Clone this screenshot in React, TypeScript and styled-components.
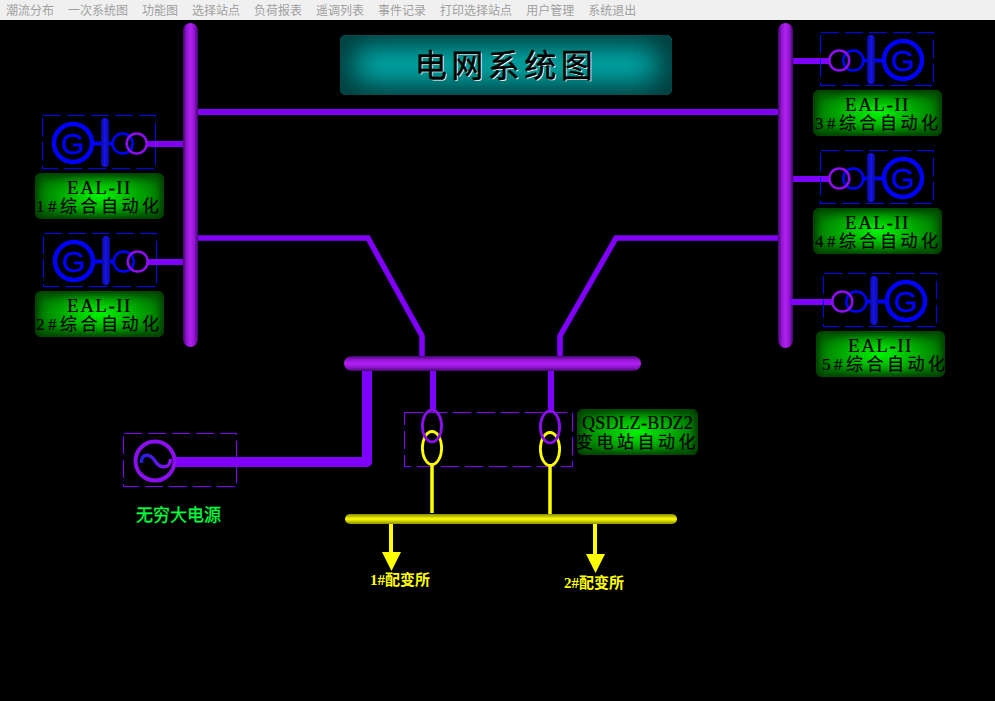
import styled, { createGlobalStyle } from "styled-components";

const GlobalStyle = createGlobalStyle`
  html, body {
    margin: 0;
    padding: 0;
    background: #000;
    overflow: hidden;
  }
`;

const Page = styled.div`
  width: 995px;
  height: 701px;
  display: flex;
  flex-direction: column;
  background: #000;
`;

const Menu = styled.nav`
  height: 20px;
  flex: none;
  display: flex;
  align-items: center;
  gap: 14px;
  padding-left: 6px;
  background: #f0f0f0;
`;

const MenuItem = styled.span`
  font: 12px/20px "Noto Sans CJK SC", sans-serif;
  color: #a0a0a0;
  white-space: nowrap;
`;

const Canvas = styled.div`
  position: relative;
  flex: 1;
`;

const Drawing = styled.svg`
  position: absolute;
  left: 0;
  top: 0;
  display: block;
`;

const Wire = styled.path<{ $color: string; $width: number }>`
  fill: none;
  stroke: ${(p) => p.$color};
  stroke-width: ${(p) => p.$width};
`;

const Ring = styled.ellipse<{ $color: string; $width: number; $solid?: boolean }>`
  fill: ${(p) => (p.$solid ? "#000" : "none")};
  stroke: ${(p) => p.$color};
  stroke-width: ${(p) => p.$width};
`;

const DashBox = styled.rect<{ $color: string }>`
  fill: none;
  stroke: ${(p) => p.$color};
  stroke-width: 1;
  stroke-dasharray: 18 6;
  shape-rendering: crispEdges;
`;

const GLetter = styled.text`
  font: 30px "Liberation Sans", sans-serif;
  fill: #0000ff;
  stroke: #0000ff;
  stroke-width: 0.4;
  text-anchor: middle;
`;

// canvas starts below the 20px menu, labels use page coordinates minus that
const Plate = styled.div<{ $x: number; $y: number; $w: number; $h: number }>`
  position: absolute;
  left: ${(p) => p.$x}px;
  top: ${(p) => p.$y - 20}px;
  width: ${(p) => p.$w}px;
  height: ${(p) => p.$h}px;
  box-sizing: border-box;
  padding-top: 5px;
  border-radius: 6px;
  color: #000;
  -webkit-text-stroke: 0.2px #000;
  background: radial-gradient(ellipse 52% 56% at center, #00f400 0%, #00c000 40%, #007000 100%);
  box-shadow: inset 0 0 10px 2px #002c00;
`;

const PlateCode = styled.div<{ $size: number; $spacing: number }>`
  height: 19px;
  font: ${(p) => p.$size}px/19px "Liberation Serif", serif;
  letter-spacing: ${(p) => p.$spacing}px;
  text-align: center;
  white-space: nowrap;
`;

const PlateName = styled.div<{ $indent: number }>`
  height: 19px;
  margin-left: ${(p) => p.$indent}px;
  font: 17px/19px "Liberation Serif", "Noto Sans CJK SC", serif;
  letter-spacing: 3.5px;
  white-space: nowrap;
`;

const TitlePlate = styled.div`
  position: absolute;
  left: 340px;
  top: 15px;
  width: 332px;
  height: 60px;
  box-sizing: border-box;
  padding-bottom: 5px;
  display: flex;
  align-items: center;
  justify-content: center;
  border-radius: 6px;
  background: #00c4c4;
  box-shadow: inset 0 0 30px 15px #003a3a;
`;

const TitleText = styled.h1`
  margin: 0;
  font: 400 32px/36px "Noto Sans CJK SC", sans-serif;
  letter-spacing: 4.5px;
  color: #000;
  -webkit-text-stroke: 0.5px #000;
  text-shadow: 1px 1px 0 #fff;
  white-space: nowrap;
`;

const Caption = styled.div<{ $x: number; $y: number; $color: string }>`
  position: absolute;
  left: ${(p) => p.$x}px;
  top: ${(p) => p.$y - 20}px;
  font: 700 15px/18px "Liberation Serif", "Noto Sans CJK SC", serif;
  color: ${(p) => p.$color};
  white-space: nowrap;
`;

const SourceCaption = styled(Caption)`
  font: 400 17px/20px "Noto Sans CJK SC", sans-serif;
  -webkit-text-stroke: 0.3px ${(p) => p.$color};
`;

const PURPLE = "#8000ff";
const VIOLET = "#8a10f0";
const BLUE = "#0000ff";
const YELLOW = "#ffff00";

const menuItems = [
  "潮流分布",
  "一次系统图",
  "功能图",
  "选择站点",
  "负荷报表",
  "遥调列表",
  "事件记录",
  "打印选择站点",
  "用户管理",
  "系统退出",
];

const plates = [
  { x: 35, y: 173, code: "EAL-II", name: "1#综合自动化", indent: 1 },
  { x: 35, y: 291, code: "EAL-II", name: "2#综合自动化", indent: 1 },
  { x: 813, y: 90, code: "EAL-II", name: "3#综合自动化", indent: 2 },
  { x: 813, y: 208, code: "EAL-II", name: "4#综合自动化", indent: 2 },
  { x: 816, y: 331, code: "EAL-II", name: "5#综合自动化", indent: 6 },
];

const generators = [
  { x: 42, y: 115, flip: false },
  { x: 43, y: 233, flip: false },
  { x: 820, y: 32, flip: true },
  { x: 820, y: 150, flip: true },
  { x: 823, y: 273, flip: true },
];

const Generator = ({ x, y, flip }: { x: number; y: number; flip: boolean }) => {
  // drawn facing the left bus, mirrored for the ones on the right bus
  const at = (d: number) => (flip ? 114 - d : d);
  return (
    <g transform={`translate(${x} ${y})`}>
      <DashBox $color={BLUE} x={0.5} y={0.5} width={113} height={53} />
      <Ring $color={BLUE} $width={4.5} cx={at(31)} cy={28} rx={19} ry={19} />
      <GLetter x={at(31)} y={38.5}>
        G
      </GLetter>
      <Wire $color={BLUE} $width={4} d={`M${at(51)} 28.5H${at(60)}`} />
      <Wire $color={BLUE} $width={4} d={`M${at(66)} 28.5H${at(71)}`} />
      <rect x={at(flip ? 67 : 59)} y={3} width={8} height={49} rx={4} fill="url(#busBlue)" />
      <Ring $color={BLUE} $width={2.6} cx={at(80.7)} cy={28.5} rx={10} ry={10} />
      <Ring $color={VIOLET} $width={2.6} cx={at(94.7)} cy={28.5} rx={10} ry={10} />
    </g>
  );
};

export default function App() {
  return (
    <Page>
      <GlobalStyle />
      <Menu>
        {menuItems.map((item) => (
          <MenuItem key={item}>{item}</MenuItem>
        ))}
      </Menu>
      <Canvas>
        <Drawing width={995} height={681} viewBox="0 20 995 681">
          <defs>
            <linearGradient id="busV" x1="0" y1="0" x2="1" y2="0">
              <stop offset="0" stopColor="#40086a" />
              <stop offset="0.25" stopColor="#9414d4" />
              <stop offset="0.5" stopColor="#b020f0" />
              <stop offset="0.75" stopColor="#9414d4" />
              <stop offset="1" stopColor="#40086a" />
            </linearGradient>
            <linearGradient id="busH" x1="0" y1="0" x2="0" y2="1">
              <stop offset="0" stopColor="#40086a" />
              <stop offset="0.25" stopColor="#9414d4" />
              <stop offset="0.5" stopColor="#b020f0" />
              <stop offset="0.75" stopColor="#9414d4" />
              <stop offset="1" stopColor="#40086a" />
            </linearGradient>
            <linearGradient id="busBlue" x1="0" y1="0" x2="1" y2="0">
              <stop offset="0" stopColor="#0a0a90" />
              <stop offset="0.5" stopColor="#1414f0" />
              <stop offset="1" stopColor="#0a0a90" />
            </linearGradient>
            <linearGradient id="busYellow" x1="0" y1="0" x2="0" y2="1">
              <stop offset="0" stopColor="#8c8c00" />
              <stop offset="0.5" stopColor="#ffff00" />
              <stop offset="1" stopColor="#8c8c00" />
            </linearGradient>
            <linearGradient id="sine" x1="0" y1="0" x2="1" y2="0">
              <stop offset="0" stopColor="#2020e0" />
              <stop offset="1" stopColor="#9010f0" />
            </linearGradient>
          </defs>

          {/* lines between the buses */}
          <Wire $color={PURPLE} $width={6} d="M198 112H778" />
          <Wire $color={PURPLE} $width={5.5} d="M198 238H368L422 336V357" />
          <Wire $color={PURPLE} $width={5.5} d="M778 238H616L560 336V357" />

          {/* generator feeders */}
          <Wire $color={PURPLE} $width={6} d="M147 144H184" />
          <Wire $color={PURPLE} $width={6} d="M148 262H184" />
          <Wire $color={PURPLE} $width={6} d="M793 61H829" />
          <Wire $color={PURPLE} $width={6} d="M793 179H829" />

          {/* infinite source feeder */}
          <Wire $color={PURPLE} $width={10} strokeLinejoin="round" d="M175 462H367V370" />

          <rect x={183} y={23} width={15} height={324} rx={7.5} fill="url(#busV)" />
          <rect x={778} y={23} width={15} height={325} rx={7.5} fill="url(#busV)" />
          <rect x={344} y={356} width={297} height={15} rx={7.5} fill="url(#busH)" />

          <Wire $color={PURPLE} $width={6} d="M790 302H832" />

          {generators.map((g) => (
            <Generator key={`${g.x}-${g.y}`} x={g.x} y={g.y} flip={g.flip} />
          ))}

          {/* infinite source */}
          <DashBox $color={PURPLE} x={123.5} y={433.5} width={113} height={53} />
          <Ring $color={VIOLET} $width={4} $solid cx={155} cy={461} rx={19.5} ry={19.5} />
          <path
            d="M141.5 463C141 453 150 453 155 461C160 469 170 469 170.5 459"
            fill="none"
            stroke="url(#sine)"
            strokeWidth={3.4}
          />

          {/* substation transformers */}
          <DashBox $color={PURPLE} x={404.5} y={412.5} width={168} height={54} />
          <Wire $color={PURPLE} $width={6} d="M433 371V411" />
          <Wire $color={PURPLE} $width={6} d="M551 371V412" />
          <Wire $color={YELLOW} $width={3.5} d="M432 465V513" />
          <Wire $color={YELLOW} $width={3.5} d="M550 466V514" />
          <Ring $color={YELLOW} $width={2.8} cx={432} cy={448} rx={9.6} ry={16.5} />
          <Ring $color={VIOLET} $width={2.8} cx={432} cy={426} rx={9.6} ry={15.8} />
          <Ring $color={YELLOW} $width={2.8} cx={550} cy={449} rx={9.6} ry={16.5} />
          <Ring $color={VIOLET} $width={2.8} cx={550} cy={427} rx={9.6} ry={15.8} />

          {/* distribution bus and outgoing arrows */}
          <rect x={345} y={514} width={332} height={10} rx={5} fill="url(#busYellow)" />
          <Wire $color={YELLOW} $width={4} d="M391 524V553" />
          <polygon points="382,552 401,552 391.5,571" fill={YELLOW} />
          <Wire $color={YELLOW} $width={4} d="M595 524V555" />
          <polygon points="586,554 605,554 595.5,573" fill={YELLOW} />
        </Drawing>

        <TitlePlate>
          <TitleText>电网系统图</TitleText>
        </TitlePlate>

        {plates.map((p) => (
          <Plate key={p.name} $x={p.x} $y={p.y} $w={129} $h={46}>
            <PlateCode $size={19} $spacing={1.5}>
              {p.code}
            </PlateCode>
            <PlateName $indent={p.indent}>{p.name}</PlateName>
          </Plate>
        ))}

        <Plate $x={577} $y={409} $w={121} $h={46}>
          <PlateCode $size={18} $spacing={0.2}>
            QSDLZ-BDZ2
          </PlateCode>
          <PlateName $indent={-1}>变电站自动化</PlateName>
        </Plate>

        <SourceCaption $x={136} $y={504} $color="#00ff40">
          无穷大电源
        </SourceCaption>
        <Caption $x={370} $y={571} $color={YELLOW}>
          1#配变所
        </Caption>
        <Caption $x={564} $y={574} $color={YELLOW}>
          2#配变所
        </Caption>
      </Canvas>
    </Page>
  );
}
